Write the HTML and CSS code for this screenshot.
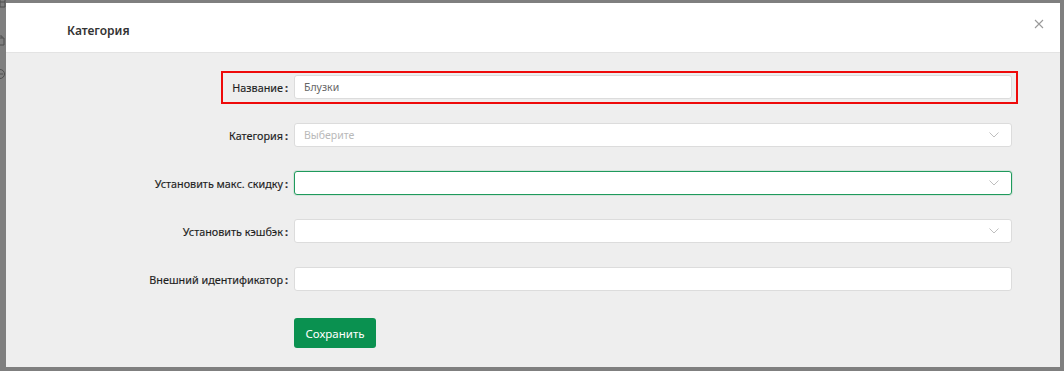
FILE: index.html
```html
<!DOCTYPE html>
<html lang="ru">
<head>
<meta charset="utf-8">
<title>Категория</title>
<link rel="stylesheet" href="styles.css">
</head>
<body>
<div class="screen">
  <div class="side">
    <svg class="side-icon i1" width="12" height="12" viewBox="0 0 12 12"><path d="M1 1h10v10H1zM1 6h10M6 1v10" fill="none" stroke="#3a3a3a" stroke-width="1"/></svg>
    <svg class="side-icon i2" width="12" height="12" viewBox="0 0 12 12"><path d="M2 4h8v7H2zM4 4V2h4v2" fill="none" stroke="#3a3a3a" stroke-width="1"/></svg>
    <svg class="side-icon i3" width="12" height="12" viewBox="0 0 12 12"><circle cx="6" cy="6" r="4.5" fill="none" stroke="#3a3a3a" stroke-width="1"/><path d="M3 6h6" stroke="#3a3a3a"/></svg>
  </div>
  <div class="modal">
    <div class="modal-header">
      <span class="modal-title">Категория</span>
      <svg class="close" width="10" height="10" viewBox="0 0 10 10"><path d="M1 1l8 8M9 1l-8 8" stroke="#9a9a9a" stroke-width="1.1"/></svg>
    </div>
    <div class="modal-body">
      <div class="highlight"></div>
      <form class="form">
        <label class="label">Название<span class="colon">:</span></label>
        <div class="input"><span class="value">Блузки</span></div>

        <label class="label">Категория<span class="colon">:</span></label>
        <div class="input select"><span class="placeholder">Выберите</span>
          <svg class="chev" width="10" height="6" viewBox="0 0 10 6"><path d="M0.5 0.5L5 5l4.5-4.5" fill="none" stroke="#bfbfbf" stroke-width="1"/></svg>
        </div>

        <label class="label">Установить макс. скидку<span class="colon">:</span></label>
        <div class="input select focus">
          <svg class="chev" width="10" height="6" viewBox="0 0 10 6"><path d="M0.5 0.5L5 5l4.5-4.5" fill="none" stroke="#bfbfbf" stroke-width="1"/></svg>
        </div>

        <label class="label">Установить кэшбэк<span class="colon">:</span></label>
        <div class="input select">
          <svg class="chev" width="10" height="6" viewBox="0 0 10 6"><path d="M0.5 0.5L5 5l4.5-4.5" fill="none" stroke="#bfbfbf" stroke-width="1"/></svg>
        </div>

        <label class="label">Внешний идентификатор<span class="colon">:</span></label>
        <div class="input"></div>

        <div class="btn-row"><button type="button" class="btn">Сохранить</button></div>
      </form>
    </div>
  </div>
</div>
</body>
</html>
```
FILE: styles.css
```css
html, body {
  margin: 0;
  padding: 0;
}
body {
  width: 1064px;
  height: 371px;
  background: #7f7f7f;
  font-family: "Noto Sans", "Open Sans", sans-serif;
  overflow: hidden;
}
.screen {
  display: flex;
  height: 371px;
}
.side {
  width: 6px;
  overflow: hidden;
  position: relative;
  flex: none;
}
.side-icon {
  position: absolute;
  left: -6px;
  opacity: 0.7;
}
.i1 { top: -4px; }
.i2 { top: 34px; }
.i3 { top: 68px; }
.modal {
  margin-top: 3px;
  width: 1054px;
  height: 364px;
  background: #eeeeee;
  display: flex;
  flex-direction: column;
}
.modal-header {
  position: relative;
  height: 50px;
  background: #fff;
  border-bottom: 1px solid #e3e3e3;
  display: flex;
  align-items: center;
  padding: 6px 0 0 61px;
  box-sizing: border-box;
  flex: none;
}
.modal-title {
  font-size: 12px;
  font-weight: 600;
  color: #333;
}
.close {
  position: absolute;
  right: 16px;
  top: 16px;
}
.modal-body {
  position: relative;
  padding: 22px 48px 0 0;
}
.highlight {
  position: absolute;
  left: 215px;
  top: 18px;
  width: 797px;
  height: 33px;
  box-sizing: border-box;
  border: 2px solid #ee0a0a;
  pointer-events: none;
}
.form {
  display: grid;
  grid-template-columns: 282px 1fr;
  column-gap: 6px;
  row-gap: 24px;
  align-items: center;
}
.label {
  text-align: right;
  font-size: 10.8px;
  color: #1e1e1e;
  white-space: nowrap;
  -webkit-text-stroke: 0.15px #1e1e1e;
}
.colon {
  margin-left: 2px;
  font-weight: 700;
}
.input {
  height: 24px;
  box-sizing: border-box;
  background: #fff;
  border: 1px solid #dcdcdc;
  border-radius: 3px;
  display: flex;
  align-items: center;
  padding: 0 12px 0 9px;
  font-size: 10.5px;
}
.value { color: #666; }
.placeholder { color: #b9b9b9; }
.select { justify-content: space-between; }
.chev { margin-left: auto; }
.focus {
  border-color: #1f9a5c;
  box-shadow: 0 0 0 1px rgba(31, 154, 92, 0.12);
}
.btn-row {
  grid-column: 2;
  margin-top: 3px;
}
.btn {
  width: 82px;
  height: 30px;
  border: none;
  border-radius: 3px;
  background: #0a9150;
  color: #fff;
  font-family: "Noto Sans", "Open Sans", sans-serif;
  font-size: 11.5px;
  padding: 0;
}
```
